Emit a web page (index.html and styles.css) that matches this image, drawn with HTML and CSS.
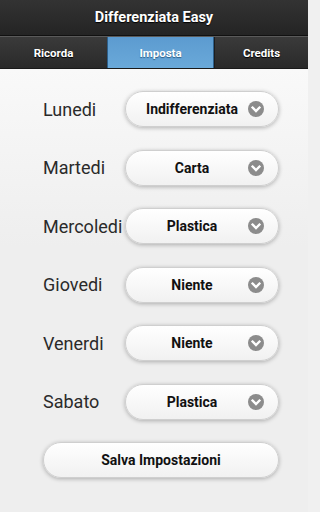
FILE: index.html
```html
<!DOCTYPE html>
<html lang="it">
<head>
<meta charset="utf-8">
<title>Differenziata Easy</title>
<link rel="stylesheet" href="styles.css">
</head>
<body>
<header class="header">Differenziata Easy</header>
<nav class="tabs">
  <div class="tab">Ricorda</div>
  <div class="tab active">Imposta</div>
  <div class="tab">Credits</div>
</nav>
<main class="content">
  <div class="rows">
    <div class="row"><span class="day">Lunedi</span><div class="select"><span class="val">Indifferenziata</span><span class="chev"><svg viewBox="0 0 16 16" width="16" height="16"><circle cx="8" cy="8" r="8" fill="#8c8c8c"/><path d="M4.6 6.6 L8 10 L11.4 6.6" fill="none" stroke="#fff" stroke-width="2.4" stroke-linecap="square"/></svg></span></div></div>
    <div class="row"><span class="day">Martedi</span><div class="select"><span class="val">Carta</span><span class="chev"><svg viewBox="0 0 16 16" width="16" height="16"><circle cx="8" cy="8" r="8" fill="#8c8c8c"/><path d="M4.6 6.6 L8 10 L11.4 6.6" fill="none" stroke="#fff" stroke-width="2.4" stroke-linecap="square"/></svg></span></div></div>
    <div class="row"><span class="day">Mercoledi</span><div class="select"><span class="val">Plastica</span><span class="chev"><svg viewBox="0 0 16 16" width="16" height="16"><circle cx="8" cy="8" r="8" fill="#8c8c8c"/><path d="M4.6 6.6 L8 10 L11.4 6.6" fill="none" stroke="#fff" stroke-width="2.4" stroke-linecap="square"/></svg></span></div></div>
    <div class="row"><span class="day">Giovedi</span><div class="select"><span class="val">Niente</span><span class="chev"><svg viewBox="0 0 16 16" width="16" height="16"><circle cx="8" cy="8" r="8" fill="#8c8c8c"/><path d="M4.6 6.6 L8 10 L11.4 6.6" fill="none" stroke="#fff" stroke-width="2.4" stroke-linecap="square"/></svg></span></div></div>
    <div class="row"><span class="day">Venerdi</span><div class="select"><span class="val">Niente</span><span class="chev"><svg viewBox="0 0 16 16" width="16" height="16"><circle cx="8" cy="8" r="8" fill="#8c8c8c"/><path d="M4.6 6.6 L8 10 L11.4 6.6" fill="none" stroke="#fff" stroke-width="2.4" stroke-linecap="square"/></svg></span></div></div>
    <div class="row"><span class="day">Sabato</span><div class="select"><span class="val">Plastica</span><span class="chev"><svg viewBox="0 0 16 16" width="16" height="16"><circle cx="8" cy="8" r="8" fill="#8c8c8c"/><path d="M4.6 6.6 L8 10 L11.4 6.6" fill="none" stroke="#fff" stroke-width="2.4" stroke-linecap="square"/></svg></span></div></div>
    <div class="btn">Salva Impostazioni</div>
  </div>
</main>
</body>
</html>
```
FILE: styles.css
```css
html, body {
  margin: 0;
  padding: 0;
  height: 100%;
}
body {
  font-family: Roboto, "Liberation Sans", sans-serif;
  background: #f0f0f0;
  width: 308px;
  height: 512px;
  overflow: hidden;
  display: flex;
  flex-direction: column;
}
.header {
  height: 36px;
  background: linear-gradient(#333333, #242424);
  color: #fff;
  font-weight: 700;
  font-size: 14.5px;
  text-shadow: 0 1px 1px #000;
  display: flex;
  align-items: center;
  justify-content: center;
  border-bottom: 1px solid #111;
  box-sizing: border-box;
}
.tabs {
  height: 33px;
  display: grid;
  grid-template-columns: 107px 107px 1fr;
  background: linear-gradient(#3a3a3a, #2a2a2a);
  border-top: 1px solid #5a5a5a;
  border-bottom: 1px solid #1a1a1a;
  box-sizing: border-box;
}
.tab {
  display: flex;
  align-items: center;
  justify-content: center;
  color: #fff;
  font-weight: 700;
  font-size: 11.5px;
  text-shadow: 0 1px 1px #000;
  border-left: 1px solid #1e1e1e;
}
.tab:first-child {
  border-left: none;
}
.tab.active {
  background: linear-gradient(#5c9bd0, #6aa9d9);
  text-shadow: 0 1px 1px #2c5d86;
  border-left: 1px solid #2d5f8a;
  border-right: 1px solid #2d5f8a;
}
.content {
  flex: 1;
  background: linear-gradient(#f9f9f9, #eeeeee 40%);
  padding: 22px 29px 0 43px;
}
.rows {
  display: grid;
  grid-template-columns: 82px 154px;
  row-gap: 22.6px;
}
.row {
  display: contents;
}
.day {
  display: flex;
  align-items: center;
  font-size: 18px;
  color: #2a2a2a;
  height: 36px;
}
.select, .btn {
  height: 36px;
  box-sizing: border-box;
  border: 1px solid #cfcfcf;
  border-radius: 18px;
  background: linear-gradient(#ffffff, #f1f1f1);
  box-shadow: 0 1px 4px rgba(0, 0, 0, 0.28);
  display: flex;
  align-items: center;
  font-weight: 700;
  font-size: 14px;
  color: #111;
}
.select {
  padding: 0 14px 0 18px;
}
.val {
  flex: 1;
  text-align: center;
  padding-right: 24px;
  margin-right: -16px;
}
.chev {
  width: 16px;
  height: 16px;
  display: flex;
}
.btn {
  grid-column: 1 / 3;
  justify-content: center;
  margin-top: -0.6px;
}
```
